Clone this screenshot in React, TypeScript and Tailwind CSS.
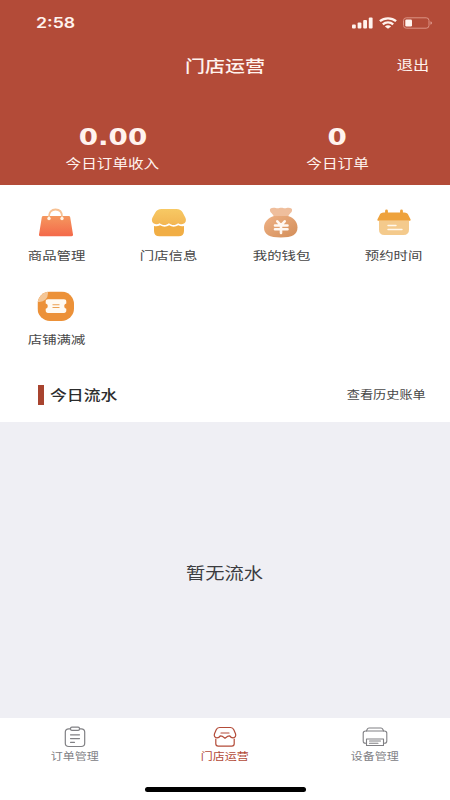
import type { ReactNode } from "react";

interface MenuItem {
    label: string;
    icon: ReactNode;
}

interface TabItem {
    label: string;
    icon: ReactNode;
    active?: boolean;
}

function BagIcon() {
    return (
        <svg width="36" height="30" viewBox="0 0 36 30" fill="none">
            <defs>
                <linearGradient id="bag" x1="0" y1="0" x2="0" y2="1">
                    <stop offset="0" stopColor="#f5975e" />
                    <stop offset="1" stopColor="#f4694a" />
                </linearGradient>
            </defs>
            <path d="M5.500 8h25c.9 0 1.500.5 1.700 1.300L35 26.600c.2 1-.5 1.600-1.500 1.600h-31C1.500 28.200.8 27.600 1 26.600L3.800 9.300C4 8.500 4.600 8 5.500 8Z" fill="url(#bag)" />
            <path d="M11 10V8.500C11 4.200 13.500 1.500 17.500 1.500S24 4.200 24 8.500V10" stroke="#f7c193" strokeWidth="1.800" />
            <circle cx="11" cy="10.500" r="1.700" fill="#fff4e6" />
            <circle cx="24" cy="10.500" r="1.700" fill="#fff4e6" />
        </svg>
    );
}

function ShopIcon() {
    return (
        <svg width="36" height="30" viewBox="0 0 36 30" fill="none">
            <defs>
                <linearGradient id="shop" x1="0" y1="0" x2="0" y2="1">
                    <stop offset="0" stopColor="#f7c964" />
                    <stop offset="1" stopColor="#f3b653" />
                </linearGradient>
            </defs>
            <path d="M10.500 1h15c3 0 5 1.200 6.200 3.500l2.700 5.300c1.500 3.400-.4 6.400-3.700 6.400-1.700 0-2.500-.3-3.600-1-2.500 2.400-6.300 2.400-9.200 0-2.700 2.400-6.500 2.400-9.200 0-1.300.7-2.100 1-3.600 1-3.300 0-5.200-3-3.700-6.400l2.900-5.300C5.500 2.200 7.500 1 10.500 1Z" fill="url(#shop)" />
            <path d="M3 18c2.400.5 4.200.2 6.100-.8 2.700 1.900 6.400 1.900 9.100 0 2.700 1.900 6.400 1.900 9.100 0 1.900 1 3.600 1.300 5.700.8v5c0 3.400-1.900 5.300-5.300 5.300H8.300C4.900 28.300 3 26.400 3 23v-5Z" fill="#f1ae45" />
        </svg>
    );
}

function WalletIcon() {
    return (
        <svg width="36" height="32" viewBox="0 0 36 32" fill="none">
            <defs>
                <linearGradient id="wallet" x1="0" y1="0" x2="1" y2="1">
                    <stop offset="0" stopColor="#efb286" />
                    <stop offset="1" stopColor="#d28d58" />
                </linearGradient>
            </defs>
            <path d="M10.500.8C8 .8 6.400 2 7 4c.5 1.900 2.700 2.600 4 5.500h14c1.300-2.900 3.500-3.600 4-5.500.6-2-1-3.200-3.500-3.200-1.600 0-2.400.5-3.700.5S20 .8 18.300.8s-2.300.5-3.700.5S12.500.8 10.500.8Z" fill="#efbe9c" />
            <path d="M11 9C5 11 1 15 1 20.500c0 7 5.500 10 16.800 10s16.700-3 16.700-10C34.500 15 31 11 25 9Z" fill="url(#wallet)" />
            <path d="m14.300 14.300 3.700 4 3.700-4M12 18.500h12.500M12 22.300h12.500M18 18.500V26" stroke="#fff8f2" strokeWidth="2.600" strokeLinecap="round" />
        </svg>
    );
}

function CalendarIcon() {
    return (
        <svg width="36" height="28" viewBox="0 0 36 28" fill="none">
            <path d="M3 12h30v8.500c0 3.600-1.800 5.500-5.400 5.500H8.400C4.800 26 3 24.100 3 20.500V12Z" fill="#f4ca8c" />
            <path d="M8 3.500h20c2.600 0 3.700.8 4.600 2.900l1.900 3.900c.4.900 0 1.500-.9 1.500H2.400c-.9 0-1.300-.6-.9-1.500l1.900-3.900c.9-2.100 2-2.900 4.600-2.900Z" fill="#eea23c" />
            <path d="M10.500 2v4M25.500 2v4" stroke="#eea23c" strokeWidth="2.800" strokeLinecap="round" />
            <path d="M12 16.500h8M12 20.500h14" stroke="#fff8ec" strokeWidth="1.400" strokeLinecap="round" />
        </svg>
    );
}

function CouponIcon() {
    return (
        <svg width="38" height="31" viewBox="0 0 38 31" fill="none">
            <defs>
                <clipPath id="coupon">
                    <rect x=".5" y=".5" width="36.500" height="29.500" rx="12.500" />
                </clipPath>
            </defs>
            <g clipPath="url(#coupon)">
                <rect x=".5" y=".5" width="36.500" height="29.500" fill="#ec9138" />
                <circle cx="2.500" cy="2.500" r="8.500" fill="#f4c696" />
            </g>
            <path d="M11 8.300h16c1.500 0 2.300.8 2.300 2.300v1.900c-1.600.5-2 1.200-2 2.600s.4 2.100 2 2.600v1.900c0 1.500-.8 2.300-2.300 2.300H11c-1.500 0-2.300-.8-2.300-2.300v-1.900c1.600-.5 2-1.200 2-2.600s-.4-2.100-2-2.600v-1.900c0-1.500.8-2.300 2.300-2.300Z" fill="#fffaf2" />
            <path d="M15.500 13.700h7M15.500 16.500h7" stroke="#eba052" strokeWidth="1.100" />
        </svg>
    );
}

function OrderIcon() {
    return (
        <svg width="22" height="22" viewBox="0 0 22 22" fill="none" stroke="currentColor" strokeWidth="1.200" strokeLinecap="round">
            <path d="M6.500 2.800H4.800C2.500 2.800 1.300 3.800 1.300 6v11.300c0 2.200 1.200 3.200 3.500 3.200h12.400c2.300 0 3.500-1 3.500-3.200V6c0-2.200-1.200-3.200-3.500-3.200h-1.700" />
            <rect x="6.500" y="1.200" width="9" height="3.200" rx="1.400" />
            <path d="M6.500 8.800h9M6.500 12.600h9M6.500 16.300h4" />
        </svg>
    );
}

function StoreIcon() {
    return (
        <svg width="24" height="22" viewBox="0 0 24 22" fill="none" stroke="currentColor" strokeWidth="1.200" strokeLinecap="round" strokeLinejoin="round">
            <path d="M6.500 1.500h11c1.800 0 2.700.7 3.300 2.200l1.700 4.100c.8 2.300-.4 4-2.500 4-1.600 0-2.500-.6-3.200-1.900-1 0-1.500 0-2.100.4L12 12.300l-2.700-2c-.6-.4-1.100-.4-2.100-.4-.7 1.300-1.600 1.900-3.200 1.900-2.100 0-3.300-1.700-2.500-4l1.700-4.100c.6-1.500 1.500-2.200 3.300-2.200Z" />
            <path d="M8 7h8M2.800 13v4.800c0 1.600.8 2.400 2.400 2.400h13.600c1.600 0 2.400-.8 2.400-2.400V13" />
        </svg>
    );
}

function PrinterIcon() {
    return (
        <svg width="26" height="22" viewBox="0 0 26 22" fill="none" stroke="currentColor" strokeWidth="1.100" strokeLinecap="round" strokeLinejoin="round">
            <path d="M4.500 5 5.200 3.300C5.600 2.400 6.100 2 7 2h12c.9 0 1.400.4 1.800 1.300L21.500 5" />
            <path d="M4.300 17.300H3.700c-1.700 0-2.500-.7-2.500-2.300V7.300C1.200 5.800 2 5 3.700 5h18.600c1.700 0 2.500.8 2.500 2.300V15c0 1.600-.8 2.300-2.500 2.300h-.6" />
            <path d="M4.500 13h17v6.500h-17zM7.500 15h11M7.500 17.300h8.500" />
        </svg>
    );
}

const menuItems: MenuItem[] = [
    { label: "商品管理", icon: <BagIcon /> },
    { label: "门店信息", icon: <ShopIcon /> },
    { label: "我的钱包", icon: <WalletIcon /> },
    { label: "预约时间", icon: <CalendarIcon /> },
    { label: "店铺满减", icon: <CouponIcon /> },
];

const tabs: TabItem[] = [
    { label: "订单管理", icon: <OrderIcon /> },
    { label: "门店运营", icon: <StoreIcon />, active: true },
    { label: "设备管理", icon: <PrinterIcon /> },
];

function StatusBar() {
    return (
        <div className="flex h-[45px] items-center justify-between pl-[36px] pr-[17px]">
            <span className="origin-left scale-x-[1.22] font-['Inter'] text-[14.5px] font-semibold">2:58</span>
            <div className="flex items-center gap-[6px]">
                <svg width="21" height="12" viewBox="0 0 21 12" fill="currentColor">
                    <rect x="0" y="7.500" width="3.800" height="4" rx="1" />
                    <rect x="5.600" y="5.500" width="3.800" height="6" rx="1" />
                    <rect x="11.200" y="3" width="3.800" height="8.500" rx="1" />
                    <rect x="16.800" y=".5" width="3.800" height="11" rx="1" />
                </svg>
                <svg width="18" height="12" viewBox="0 0 18 12" fill="none" stroke="currentColor" strokeWidth="2.300">
                    <path d="M.9 4.200c4.500-3.900 11.700-3.900 16.200 0M3.800 7.400c3-2.600 7.400-2.600 10.400 0" />
                    <path d="M9 11.800 5.900 9.400c1.800-1.400 4.400-1.400 6.200 0L9 11.800Z" fill="currentColor" stroke="none" />
                </svg>
                <svg width="30" height="12" viewBox="0 0 30 12" fill="none">
                    <rect x=".5" y=".8" width="25.500" height="10.400" rx="2.800" stroke="#dc9384" />
                    <rect x="2.300" y="2.500" width="6.700" height="7" rx="1.200" fill="currentColor" />
                    <path d="M27.500 4.200c1.900.8 1.900 2.800 0 3.600Z" fill="#e3a397" />
                </svg>
            </div>
        </div>
    );
}

function Stat({ value, label }: { value: string; label: string }) {
    return (
        <div className="flex w-1/2 flex-col items-center">
            <span className="scale-x-[1.18] font-['DejaVu_Sans'] text-[23.5px] leading-[28px] font-bold">{value}</span>
            <span className="mt-[2px] scale-x-[1.22] text-[12.8px] leading-[20px]">{label}</span>
        </div>
    );
}

export default function App() {
    return (
        <div className="flex h-[800px] w-[450px] flex-col overflow-hidden bg-white font-['Noto_Sans_CJK_SC',sans-serif] text-[#474747]">
            <header className="h-[185px] shrink-0 bg-[#b34b38] text-[#fff3ee]">
                <StatusBar />
                <div className="grid h-[40px] grid-cols-3 items-center">
                    <h1 className="col-start-2 scale-x-[1.22] text-center text-[16.4px] font-medium">门店运营</h1>
                    <span className="origin-right scale-x-[1.22] pr-[17px] text-right text-[13.3px]">退出</span>
                </div>
                <div className="mt-[38px] flex">
                    <Stat value="0.00" label="今日订单收入" />
                    <Stat value="0" label="今日订单" />
                </div>
            </header>

            {/* Store tools */}
            <section className="grid h-[182px] shrink-0 grid-cols-4 grid-rows-[84px_84px] pt-[19px]">
                {menuItems.map((item) => (
                    <div key={item.label} className="flex flex-col items-center">
                        <div className="flex h-[37px] items-center">{item.icon}</div>
                        <span className="mt-[5px] scale-x-[1.22] text-[11.8px] leading-[18px]">{item.label}</span>
                    </div>
                ))}
            </section>

            {/* Daily cash flow */}
            <section className="flex h-[55px] shrink-0 items-center justify-between pr-[24px] pl-[38px]">
                <div className="flex items-center">
                    <i className="mr-[6px] h-5 w-[6px] bg-[#a8442f]" />
                    <h2 className="origin-left scale-x-[1.22] text-[13.8px] font-medium text-[#2c2c2c]">今日流水</h2>
                </div>
                <span className="origin-right scale-x-[1.22] text-[10.8px]">查看历史账单</span>
            </section>

            <main className="flex h-[296px] shrink-0 items-center justify-center bg-[#efeff4]">
                <p className="mt-[5px] scale-x-[1.22] text-[15.8px] text-[#3c3c40]">暂无流水</p>
            </main>

            <nav className="grid grow grid-cols-3 pt-[8px]">
                {tabs.map((tab) => (
                    <div key={tab.label} className={`flex flex-col items-center ${tab.active ? "text-[#b34b38]" : "text-[#808084]"}`}>
                        {tab.icon}
                        <span className="mt-px scale-x-[1.22] text-[9.85px] leading-[15px]">{tab.label}</span>
                    </div>
                ))}
            </nav>
            <div className="mx-auto mb-[8px] h-[5px] w-[161px] shrink-0 rounded-full bg-black" />
        </div>
    );
}
